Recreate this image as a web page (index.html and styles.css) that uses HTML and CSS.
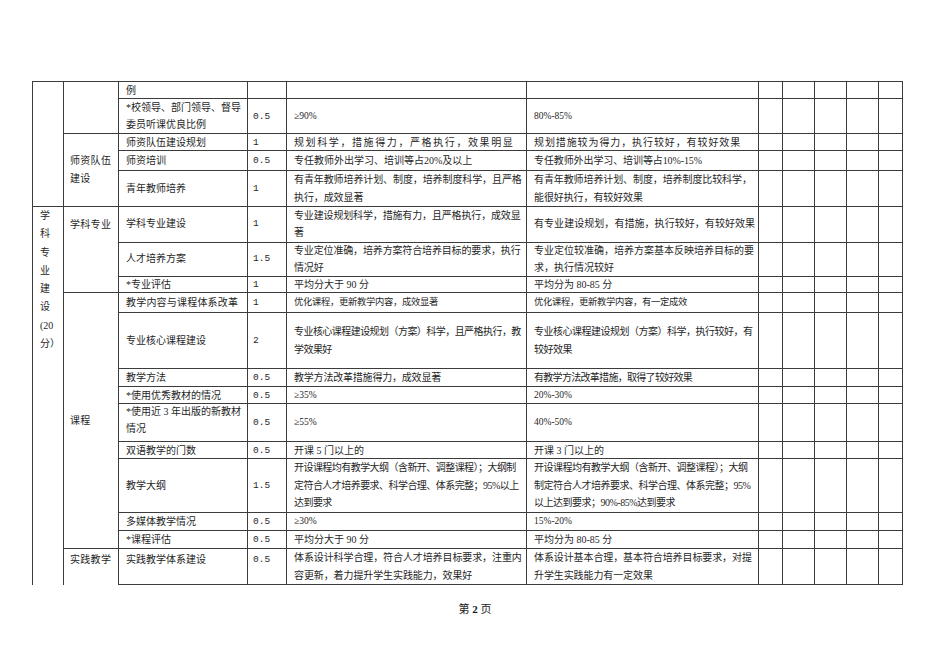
FILE: index.html
```html
<!DOCTYPE html>
<html lang="zh-CN">
<head>
<meta charset="utf-8">
<title>学科专业建设评估表</title>
<link rel="stylesheet" href="styles.css">
</head>
<body>
<main class="sheet">
<table class="grid">
<colgroup>
<col class="c1"><col class="c2"><col class="c3"><col class="c4"><col class="c5"><col class="c6"><col class="c7"><col class="c8"><col class="c9"><col class="c10"><col class="c11">
</colgroup>
<tbody>
<tr class="h17 one">
  <td rowspan="5" class="cat"></td>
  <td rowspan="2" class="sub"></td>
  <td class="item">例</td><td class="num"></td><td class="txt"></td><td class="txt"></td>
  <td></td><td></td><td></td><td></td><td></td>
</tr>
<tr class="h35 lh17">
  <td class="item">*校领导、部门领导、督导<br>委员听课优良比例</td><td class="num">0.5</td><td class="txt pct">≥90%</td><td class="txt pct">80%-85%</td>
  <td></td><td></td><td></td><td></td><td></td>
</tr>
<tr class="h17 one">
  <td rowspan="3" class="sub mid">师资队伍<br>建设</td>
  <td class="item">师资队伍建设规划</td><td class="num">1</td><td class="txt ls-p16">规划科学，措施得力，严格执行，效果明显</td><td class="txt ls-p9">规划措施较为得力，执行较好，有较好效果</td>
  <td></td><td></td><td></td><td></td><td></td>
</tr>
<tr class="h20 one">
  <td class="item">师资培训</td><td class="num">0.5</td><td class="txt">专任教师外出学习、培训等占20%及以上</td><td class="txt ls-m1">专任教师外出学习、培训等占10%-15%</td>
  <td></td><td></td><td></td><td></td><td></td>
</tr>
<tr class="h36">
  <td class="item">青年教师培养</td><td class="num">1</td><td class="txt ls-m1">有青年教师培养计划、制度，培养制度科学，且严格<br>执行，成效显著</td><td class="txt ls-m1">有青年教师培养计划、制度，培养制度比较科学，<br>能很好执行，有较好效果</td>
  <td></td><td></td><td></td><td></td><td></td>
</tr>
<tr class="h36 lh165">
  <td rowspan="13" class="cat vert">学<br>科<br>专<br>业<br>建<br>设<br>(20<br>分）</td>
  <td rowspan="3" class="sub top1">学科专业</td>
  <td class="item">学科专业建设</td><td class="num">1</td><td class="txt ls-m15">专业建设规划科学，措施有力，且严格执行，成效显<br>著</td><td class="txt ls-p1">有专业建设规划，有措施，执行较好，有较好效果</td>
  <td></td><td></td><td></td><td></td><td></td>
</tr>
<tr class="h34 lh165">
  <td class="item">人才培养方案</td><td class="num">1.5</td><td class="txt ls-m15">专业定位准确，培养方案符合培养目标的要求，执行<br>情况好</td><td class="txt">专业定位较准确，培养方案基本反映培养目标的要<br>求，执行情况较好</td>
  <td></td><td></td><td></td><td></td><td></td>
</tr>
<tr class="h16 one">
  <td class="item">*专业评估</td><td class="num">1</td><td class="txt">平均分大于 90 分</td><td class="txt">平均分为 80-85 分</td>
  <td></td><td></td><td></td><td></td><td></td>
</tr>
<tr class="h20 one">
  <td rowspan="9" class="sub mid">课程</td>
  <td class="item ls-p2">教学内容与课程体系改革</td><td class="num">1</td><td class="txt fs-sm">优化课程，更新教学内容，成效显著</td><td class="txt fs-sm">优化课程，更新教学内容，有一定成效</td>
  <td></td><td></td><td></td><td></td><td></td>
</tr>
<tr class="h56">
  <td class="item">专业核心课程建设</td><td class="num">2</td><td class="txt ls-m55">专业核心课程建设规划（方案）科学，且严格执行，教<br>学效果好</td><td class="txt ls-m5">专业核心课程建设规划（方案）科学，执行较好，有<br>较好效果</td>
  <td></td><td></td><td></td><td></td><td></td>
</tr>
<tr class="h18 one">
  <td class="item">教学方法</td><td class="num">0.5</td><td class="txt ls-m2">教学方法改革措施得力，成效显著</td><td class="txt ls-m7">有教学方法改革措施，取得了较好效果</td>
  <td></td><td></td><td></td><td></td><td></td>
</tr>
<tr class="h17 one">
  <td class="item">*使用优秀教材的情况</td><td class="num">0.5</td><td class="txt pct">≥35%</td><td class="txt pct">20%-30%</td>
  <td></td><td></td><td></td><td></td><td></td>
</tr>
<tr class="h38">
  <td class="item raise">*使用近 3 年出版的新教材<br>情况</td><td class="num">0.5</td><td class="txt pct">≥55%</td><td class="txt pct">40%-50%</td>
  <td></td><td></td><td></td><td></td><td></td>
</tr>
<tr class="h17 one">
  <td class="item">双语教学的门数</td><td class="num">0.5</td><td class="txt">开课 5 门以上的</td><td class="txt">开课 3 门以上的</td>
  <td></td><td></td><td></td><td></td><td></td>
</tr>
<tr class="h54">
  <td class="item">教学大纲</td><td class="num">1.5</td><td class="txt ls-m55">开设课程均有教学大纲（含新开、调整课程）；大纲制<br>定符合人才培养要求、科学合理、体系完整；95%以上<br>达到要求</td><td class="txt ls-m5">开设课程均有教学大纲（含新开、调整课程）；大纲<br>制定符合人才培养要求、科学合理、体系完整；95%<br>以上达到要求；90%-85%达到要求</td>
  <td></td><td></td><td></td><td></td><td></td>
</tr>
<tr class="h18 one">
  <td class="item">多媒体教学情况</td><td class="num">0.5</td><td class="txt pct">≥30%</td><td class="txt pct">15%-20%</td>
  <td></td><td></td><td></td><td></td><td></td>
</tr>
<tr class="h18 one">
  <td class="item">*课程评估</td><td class="num">0.5</td><td class="txt">平均分大于 90 分</td><td class="txt">平均分为 80-85 分</td>
  <td></td><td></td><td></td><td></td><td></td>
</tr>
<tr class="h36 last">
  <td class="sub top2 open">实践教学</td>
  <td class="item">实践教学体系建设</td><td class="num">0.5</td><td class="txt ls-m1">体系设计科学合理，符合人才培养目标要求，注重内<br>容更新，着力提升学生实践能力，效果好</td><td class="txt ls-m1">体系设计基本合理，基本符合培养目标要求，对提<br>升学生实践能力有一定效果</td>
  <td></td><td></td><td></td><td></td><td></td>
</tr>
</tbody>
</table>
</main>
<footer class="pager">第 <b>2</b> 页</footer>
</body>
</html>
```

FILE: styles.css
```css
html, body {
  margin: 0;
  padding: 0;
  background: #ffffff;
}

body {
  font-family: "Liberation Serif", "Noto Sans CJK SC", serif;
  color: #1f1f1f;
  width: 950px;
}

.sheet {
  padding: 81px 0 0 32px;
}

.grid {
  border-collapse: collapse;
  table-layout: fixed;
  width: 870px;
  font-size: 10px;
}

.c1 { width: 31px; }
.c2 { width: 55px; }
.c3 { width: 129px; }
.c4 { width: 39px; }
.c5 { width: 240px; }
.c6 { width: 232px; }
.c7 { width: 24px; }
.c8 { width: 32px; }
.c9 { width: 32px; }
.c10 { width: 32px; }
.c11 { width: 24px; }

.grid td {
  border: 1px solid #3c3c3c;
  padding: 0 1px 0 7px;
  vertical-align: middle;
  line-height: 17.5px;
  white-space: nowrap;
  text-align: left;
}

.grid tr.one td { line-height: 15px; }
.grid tr.lh17 td { line-height: 17px; }
.grid tr.lh165 td { line-height: 16.5px; }

.h16 { height: 16px; }
.h17 { height: 17px; }
.h18 { height: 18px; }
.h20 { height: 20px; }
.h34 { height: 34px; }
.h35 { height: 35px; }
.h36 { height: 36px; }
.h38 { height: 38px; }
.h54 { height: 54px; }
.h56 { height: 56px; }

.grid td.num {
  padding-left: 5px;
  font-family: "Liberation Mono", monospace;
  font-size: 9.5px;
}

.grid td.pct { font-size: 9.5px; }

/* per-cell tracking, tuned to the printed line lengths */
.grid td.ls-p16 { letter-spacing: 1.6px; }
.grid td.ls-p9 { letter-spacing: 0.9px; }
.grid td.ls-p2 { letter-spacing: 0.2px; }
.grid td.ls-p1 { letter-spacing: 0.05px; }
.grid td.ls-m1 { letter-spacing: -0.1px; }
.grid td.ls-m15 { letter-spacing: -0.15px; }
.grid td.ls-m2 { letter-spacing: -0.2px; }
.grid td.ls-m5 { letter-spacing: -0.5px; }
.grid td.ls-m55 { letter-spacing: -0.55px; }
.grid td.ls-m7 { letter-spacing: -0.7px; }
.grid td.fs-sm { font-size: 9.3px; letter-spacing: -0.3px; }

.grid td.raise {
  vertical-align: top;
  line-height: 16.5px;
  padding-top: 0;
}

.grid tr td.sub {
  padding-left: 6px;
  line-height: 18px;
  letter-spacing: 0.3px;
}
.grid td.mid { vertical-align: middle; }
.grid td.top1 { vertical-align: top; padding-top: 9px; }
.grid td.top2 { vertical-align: top; padding-top: 2px; }

.grid td.cat {
  padding: 0 0 0 7px;
  vertical-align: top;
  border-bottom: none;
}
.grid tr td.vert {
  line-height: 18.3px;
  white-space: nowrap;
}

.grid td.open { border-bottom: none; }

.grid tr.last td.item,
.grid tr.last td.num { vertical-align: top; padding-top: 2px; }

.pager {
  text-align: center;
  font-family: "Liberation Serif", "Noto Sans CJK SC", serif;
  font-size: 11px;
  line-height: 16px;
  margin-top: 16px;
  color: #1a1a1a;
}
.pager b { font-weight: bold; }
```
